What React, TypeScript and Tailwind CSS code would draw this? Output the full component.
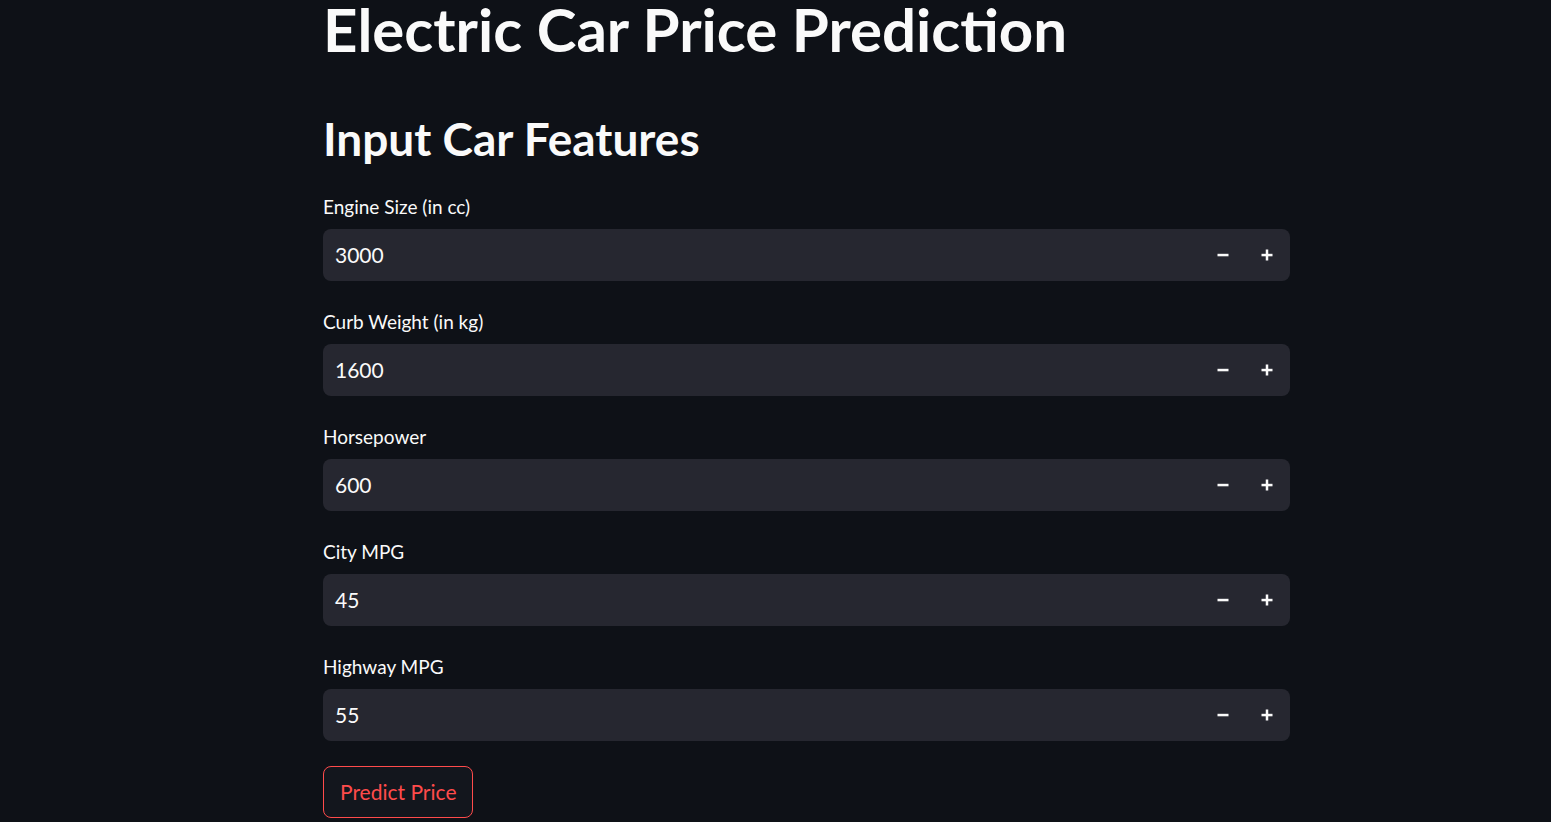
import React from 'react';

const fields = [
  { label: 'Engine Size (in cc)', value: '3000' },
  { label: 'Curb Weight (in kg)', value: '1600' },
  { label: 'Horsepower', value: '600' },
  { label: 'City MPG', value: '45' },
  { label: 'Highway MPG', value: '55' },
];

function Minus() {
  return (
    <svg width="12" height="12" viewBox="0 0 12 12">
      <rect x="0.5" y="4.8" width="11" height="2.5" fill="#fafafa" />
    </svg>
  );
}

function Plus() {
  return (
    <svg width="12" height="12" viewBox="0 0 12 12">
      <rect x="0.5" y="4.8" width="11" height="2.5" fill="#fafafa" />
      <rect x="4.75" y="0.5" width="2.5" height="11" fill="#fafafa" />
    </svg>
  );
}

function NumberField({ label, value }: { label: string; value: string }) {
  return (
    <div className="flex flex-col">
      <label className="text-[19px] leading-[24px] h-[34px]">{label}</label>
      <div className="flex items-center h-[52px] rounded-[8px] bg-[#262730]">
        <span className="flex-1 pl-[12px] text-[21px]">{value}</span>
        <button className="w-[44px] h-full flex items-center justify-center">
          <Minus />
        </button>
        <button className="w-[44px] h-full flex items-center justify-center mr-[1px]">
          <Plus />
        </button>
      </div>
    </div>
  );
}

export default function App() {
  return (
    <div className="min-h-screen bg-[#0e1117] text-[#fafafa] font-['Source_Sans_Pro','Lato',sans-serif] overflow-hidden">
      <div className="w-[967px] ml-[323px]">
        <h1 className="text-[60px] font-bold leading-[64px] -mt-[3px]">Electric Car Price Prediction</h1>
        <h2 className="text-[46px] font-bold leading-[56px] mt-[50px] mb-[28px]">Input Car Features</h2>
        <div className="flex flex-col gap-[29px]">
          {fields.map((f) => (
            <NumberField key={f.label} label={f.label} value={f.value} />
          ))}
        </div>
        <button className="mt-[25px] h-[52px] px-[16px] rounded-[8px] border border-[#ff4b4b] text-[#ff4b4b] text-[21px] bg-[#13161d]">
          Predict Price
        </button>
      </div>
    </div>
  );
}
